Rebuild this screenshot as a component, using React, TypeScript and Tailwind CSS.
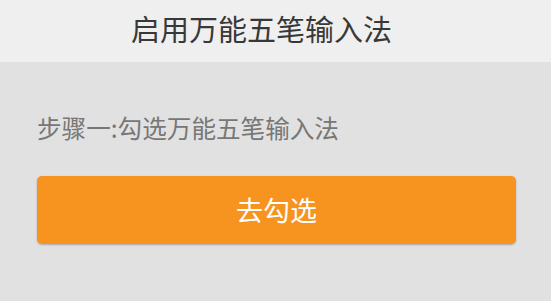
export default function App() {
  return (
    <div
      className="w-[551px] h-[301px] bg-[#e1e1e1] flex flex-col"
      style={{ fontFamily: '"Noto Sans CJK SC", "Noto Sans", sans-serif' }}
    >
      <div className="h-[62px] bg-[#efefef] flex items-center justify-center pb-[6px] pr-[28px]">
        <span className="text-[29px] leading-none text-[#383838]">启用万能五笔输入法</span>
      </div>
      <div className="px-[37px] pt-[53px]">
        <div className="text-[24.6px] leading-none text-[#777777]">步骤一:勾选万能五笔输入法</div>
        <button className="mt-[36px] w-[479px] h-[68px] rounded-[5px] bg-[#f7941f] shadow-[0_1px_2px_rgba(0,0,0,0.25)] flex items-center justify-center">
          <span className="text-[27px] leading-none text-white">去勾选</span>
        </button>
      </div>
    </div>
  );
}
